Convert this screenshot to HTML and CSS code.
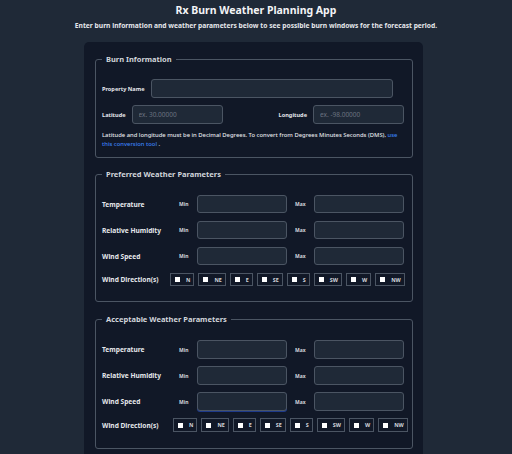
FILE: index.html
```html
<!DOCTYPE html>
<html lang="en">
<head>
<meta charset="utf-8">
<title>Rx Burn Weather Planning App</title>
<link rel="stylesheet" href="styles.css">
</head>
<body>
<header class="header">
  <h1 class="title">Rx Burn Weather Planning App</h1>
  <p class="subtitle">Enter burn information and weather parameters below to see possible burn windows for the forecast period.</p>
</header>
<main class="card">
  <fieldset class="group">
    <legend class="legend">Burn Information</legend>
    <div class="info-row">
      <label class="field-label">Property Name</label>
      <input class="input input-wide" type="text">
    </div>
    <div class="info-row info-split">
      <div class="pair">
        <label class="field-label">Latitude</label>
        <input class="input input-coord" type="text" placeholder="ex. 30.00000">
      </div>
      <div class="pair pair-lon">
        <label class="field-label">Longitude</label>
        <input class="input input-coord" type="text" placeholder="ex. -98.00000">
      </div>
    </div>
    <p class="help">Latitude and longitude must be in Decimal Degrees. To convert from Degrees Minutes Seconds (DMS), <a class="link" href="#">use this conversion tool</a> .</p>
  </fieldset>

  <fieldset class="group group-weather">
    <legend class="legend">Preferred Weather Parameters</legend>
    <div class="param-grid">
      <span class="row-label">Temperature</span><span class="mm">Min</span><input class="input" type="text"><span class="mm mm-max">Max</span><input class="input" type="text">
      <span class="row-label">Relative Humidity</span><span class="mm">Min</span><input class="input" type="text"><span class="mm mm-max">Max</span><input class="input" type="text">
      <span class="row-label">Wind Speed</span><span class="mm">Min</span><input class="input" type="text"><span class="mm mm-max">Max</span><input class="input" type="text">
    </div>
    <div class="dir-row">
      <span class="row-label dir-label">Wind Direction(s)</span>
      <div class="dirs">
        <label class="dir"><input class="check" type="checkbox"><span>N</span></label>
        <label class="dir"><input class="check" type="checkbox"><span>NE</span></label>
        <label class="dir"><input class="check" type="checkbox"><span>E</span></label>
        <label class="dir"><input class="check" type="checkbox"><span>SE</span></label>
        <label class="dir"><input class="check" type="checkbox"><span>S</span></label>
        <label class="dir"><input class="check" type="checkbox"><span>SW</span></label>
        <label class="dir"><input class="check" type="checkbox"><span>W</span></label>
        <label class="dir"><input class="check" type="checkbox"><span>NW</span></label>
      </div>
    </div>
  </fieldset>

  <fieldset class="group group-weather group-last">
    <legend class="legend">Acceptable Weather Parameters</legend>
    <div class="param-grid param-grid-tall">
      <span class="row-label">Temperature</span><span class="mm">Min</span><input class="input" type="text"><span class="mm mm-max">Max</span><input class="input" type="text">
      <span class="row-label">Relative Humidity</span><span class="mm">Min</span><input class="input" type="text"><span class="mm mm-max">Max</span><input class="input" type="text">
      <span class="row-label">Wind Speed</span><span class="mm">Min</span><input class="input input-focus" type="text"><span class="mm mm-max">Max</span><input class="input" type="text">
    </div>
    <div class="dir-row dir-row-tall">
      <span class="row-label dir-label dir-label-wide">Wind Direction(s)</span>
      <div class="dirs">
        <label class="dir"><input class="check" type="checkbox"><span>N</span></label>
        <label class="dir"><input class="check" type="checkbox"><span>NE</span></label>
        <label class="dir"><input class="check" type="checkbox"><span>E</span></label>
        <label class="dir"><input class="check" type="checkbox"><span>SE</span></label>
        <label class="dir"><input class="check" type="checkbox"><span>S</span></label>
        <label class="dir"><input class="check" type="checkbox"><span>SW</span></label>
        <label class="dir"><input class="check" type="checkbox"><span>W</span></label>
        <label class="dir"><input class="check" type="checkbox"><span>NW</span></label>
      </div>
    </div>
  </fieldset>
</main>
</body>
</html>
```

FILE: styles.css
```css
* { box-sizing: border-box; }

html, body {
  margin: 0;
  padding: 0;
  background: #1f2937;
  color: #e5e7eb;
  font-family: "Noto Sans", "DejaVu Sans", sans-serif;
  overflow: hidden;
}

.header {
  text-align: center;
  padding-top: 3px;
}

.title {
  margin: 0;
  font-size: 10.5px;
  line-height: 15px;
  font-weight: 700;
  color: #f3f4f6;
}

.subtitle {
  margin: 3px 0 0;
  font-size: 6.7px;
  line-height: 9px;
  font-weight: 700;
  color: #e5e7eb;
}

.card {
  width: 339px;
  margin: 12px 0 0 84px;
  background: #111827;
  border-radius: 5px;
  padding: 11px 10px 20px 11px;
}

.group {
  margin: 0;
  border: 1px solid #4b5563;
  border-radius: 3px;
  padding: 14px 8px 8px 6px;
  min-width: 0;
}

.group-weather {
  margin-top: 10px;
  padding-top: 15px;
  padding-bottom: 15px;
}

.group-last {
  margin-top: 11px;
  padding-bottom: 16px;
}

.legend {
  padding: 0 4px;
  font-size: 7.5px;
  line-height: 12px;
  font-weight: 700;
  color: #d1d5db;
}

.info-row {
  display: flex;
  align-items: center;
  gap: 6px;
}

.info-split {
  margin-top: 7px;
  justify-content: space-between;
}

.pair {
  display: flex;
  align-items: center;
  gap: 6px;
}

.field-label {
  font-size: 5.6px;
  font-weight: 700;
  color: #e5e7eb;
}

.input {
  display: block;
  height: 19px;
  margin: 0;
  background: #1f2937;
  border: 1px solid #4b5563;
  border-radius: 3px;
  padding: 0 6px;
  font-family: inherit;
  font-size: 6.5px;
  color: #e5e7eb;
  outline: none;
}

.input::placeholder { color: #6b7280; }

.input-wide { width: 242px; }
.input-coord { width: 91px; }

.help {
  margin: 7px 0 0;
  font-size: 5.85px;
  line-height: 9px;
  font-weight: 500;
  color: #e5e7eb;
}

.link {
  color: #3b82f6;
  text-decoration: none;
}

.param-grid {
  display: grid;
  grid-template-columns: 77px 18px 90px 27px 90px;
  grid-auto-rows: 18px;
  row-gap: 8px;
  align-items: center;
}

.param-grid-tall { grid-auto-rows: 19px; row-gap: 7px; }

.param-grid .input { height: 100%; width: 100%; }

.input-focus { box-shadow: 0 1px 0 #1e3a8a; }

.row-label {
  font-size: 6.6px;
  font-weight: 700;
  color: #e5e7eb;
  white-space: nowrap;
}

.mm {
  font-size: 5px;
  font-weight: 700;
  color: #d1d5db;
}

.mm-max { padding-left: 8px; }

.dir-row {
  display: flex;
  align-items: center;
  margin-top: 8px;
  height: 13px;
}

.dir-row-tall { margin-top: 7px; height: 14px; }

.dir-label { width: 68px; flex: none; }
.dir-label-wide { width: 71px; }

.dirs {
  display: flex;
  gap: 4px;
  height: 100%;
}

.dir {
  display: flex;
  align-items: center;
  justify-content: space-between;
  gap: 6px;
  height: 100%;
  padding: 0 3px 0 4px;
  border: 1px solid #4b5563;
  font-size: 5.4px;
  font-weight: 700;
  color: #d1d5db;
}

.check {
  appearance: none;
  -webkit-appearance: none;
  width: 5px;
  height: 5px;
  margin: 0;
  background: #ffffff;
  border: none;
  border-radius: 0;
}
```
